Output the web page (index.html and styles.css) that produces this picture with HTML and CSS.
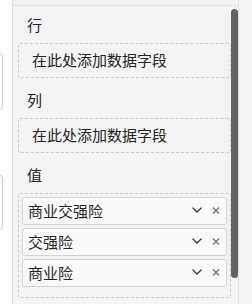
FILE: index.html
```html
<!DOCTYPE html>
<html lang="zh-CN">
<head>
  <meta charset="UTF-8" />
  <title>字段</title>
  <link rel="stylesheet" href="styles.css">
</head>
<body>
  <div class="page">

    <!-- 左侧被截断的卡片 -->
    <div class="left-strip">
      <div class="stub stub-a"></div>
      <div class="stub stub-b"></div>
    </div>

    <div class="pane">
      <div class="pane-top"></div>

      <div class="fields">
        <div class="section">
          <div class="section-label">行</div>
          <div class="drop-zone">在此处添加数据字段</div>
        </div>

        <div class="section">
          <div class="section-label">列</div>
          <div class="drop-zone">在此处添加数据字段</div>
        </div>

        <div class="section">
          <div class="section-label">值</div>
          <div class="drop-zone drop-zone-filled">
            <div class="field-pill">
              <span class="field-name">商业交强险</span>
              <svg class="icon-chevron" width="12" height="12" viewBox="0 0 12 12"><path d="M1.5 2.6 L6 7 L10.5 2.6" /></svg>
              <svg class="icon-close" width="10" height="12" viewBox="0 0 10 12"><path d="M2 2.5 L8 8.5 M8 2.5 L2 8.5" /></svg>
            </div>
            <div class="field-pill">
              <span class="field-name">交强险</span>
              <svg class="icon-chevron" width="12" height="12" viewBox="0 0 12 12"><path d="M1.5 2.6 L6 7 L10.5 2.6" /></svg>
              <svg class="icon-close" width="10" height="12" viewBox="0 0 10 12"><path d="M2 2.5 L8 8.5 M8 2.5 L2 8.5" /></svg>
            </div>
            <div class="field-pill">
              <span class="field-name">商业险</span>
              <svg class="icon-chevron" width="12" height="12" viewBox="0 0 12 12"><path d="M1.5 2.6 L6 7 L10.5 2.6" /></svg>
              <svg class="icon-close" width="10" height="12" viewBox="0 0 10 12"><path d="M2 2.5 L8 8.5 M8 2.5 L2 8.5" /></svg>
            </div>
          </div>
        </div>
      </div>

      <!-- 滚动条 -->
      <div class="scroll-thumb"></div>
    </div>

    <div class="right-gap"></div>
  </div>
</body>
</html>
```

FILE: styles.css
```css
body {
  margin: 0;
  padding: 0;
  background-color: #ffffff;
  font-family: 'Noto Sans CJK SC', 'Microsoft YaHei', sans-serif;
  font-size: 15px;
  color: #252423;
}

.page {
  display: flex;
  height: 304px;
  overflow: hidden;
}

/* 左侧卡片只露出右边缘 */
.left-strip {
  width: 12px;
  flex-shrink: 0;
  background-color: #ffffff;
  display: flex;
  flex-direction: column;
  padding-top: 53px;
  gap: 65px;
  box-sizing: border-box;
}

.stub {
  margin-left: -10px;
  width: 11px;
  border: 1px solid #cfcfcf;
  border-radius: 3px;
  background-color: #ffffff;
}

.stub-a {
  height: 55px;
}

.stub-b {
  height: 53px;
}

.pane {
  position: relative;
  width: 227px;
  flex-shrink: 0;
  box-sizing: border-box;
  background-color: #f3f3f3;
  border-left: 1px solid #e1e1e1;
  border-right: 1px solid #e1e1e1;
}

.pane-top {
  height: 5px;
  border-bottom: 1px solid #e1e1e1;
}

.fields {
  padding: 0 7px 0 5px;
  display: flex;
  flex-direction: column;
  gap: 12px;
}

.section-label {
  line-height: 20px;
  padding-left: 9px;
  margin-bottom: 8px;
}

.section:first-child .section-label {
  margin-top: 9px;
}

.drop-zone {
  border: 1px dashed #c8c8c8;
  border-radius: 2px;
  padding: 6px 12px 7px 13px;
  line-height: 20px;
  color: #252423;
}

.drop-zone-filled {
  padding: 3px 3px 10px 3px;
  display: flex;
  flex-direction: column;
  gap: 3px;
}

.field-pill {
  display: flex;
  align-items: center;
  height: 28px;
  box-sizing: border-box;
  padding: 0 5px 0 5px;
  background-color: #fafafa;
  border: 1px solid #d3d3d3;
  border-radius: 3px;
}

.field-name {
  flex: 1;
  line-height: 20px;
}

.icon-chevron {
  display: block;
  margin-right: 8px;
}

.icon-chevron path {
  fill: none;
  stroke: #333333;
  stroke-width: 1.3;
}

.icon-close {
  display: block;
}

.icon-close path {
  fill: none;
  stroke: #707070;
  stroke-width: 1.2;
}

.scroll-thumb {
  position: absolute;
  top: 9px;
  right: 0;
  width: 7px;
  height: 269px;
  border-radius: 4px;
  background-color: #646464;
}

.right-gap {
  flex: 1;
  background-color: #f3f3f3;
}
```
